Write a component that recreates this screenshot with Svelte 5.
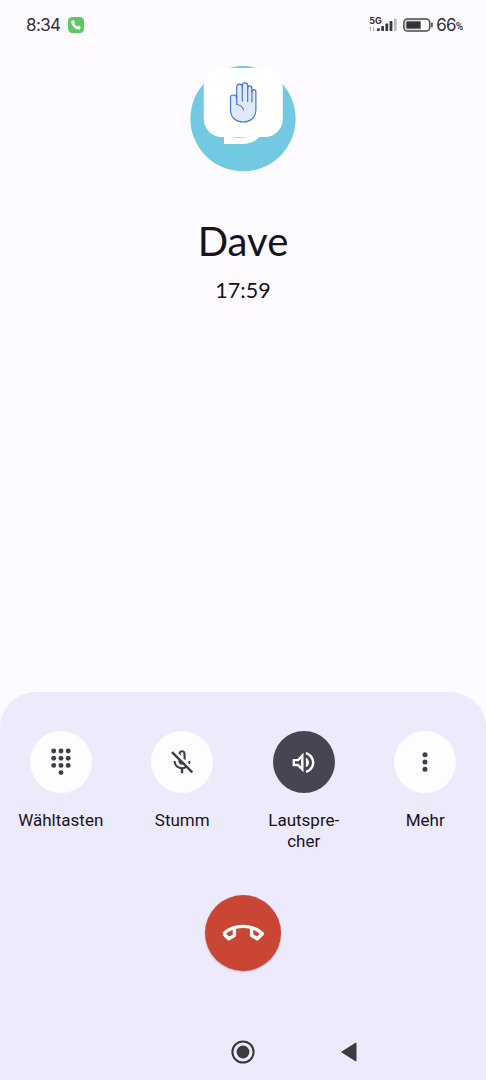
<script lang="ts">
	interface CallAction {
		id: string;
		lines: string[];
		active?: boolean;
	}

	const caller = 'Dave';
	const duration = '17:59';
	const battery = 66;

	const actions: CallAction[] = [
		{ id: 'keypad', lines: ['Wähltasten'] },
		{ id: 'mute', lines: ['Stumm'] },
		{ id: 'speaker', lines: ['Lautspre-', 'cher'], active: true },
		{ id: 'more', lines: ['Mehr'] }
	];

	const keypadDots = [
		[4.7, 1], [12, 1], [19.2, 1],
		[4.7, 8.2], [12, 8.2], [19.2, 8.2],
		[4.7, 15.4], [12, 15.4], [19.2, 15.4],
		[12, 22.6]
	];
</script>

<div class="screen">
	<header class="status">
		<span class="clock">8:34</span>
		<svg class="call-badge" width="16" height="16" viewBox="0 0 16 16">
			<rect width="16" height="16" rx="4.2" fill="#5dc866" />
			<path
				d="M4 3.700 5.600 3l1.700 2.500-1 1.300c.6 1.200 1.400 2 2.700 2.700l1.400-1 2.300 1.700-.7 1.700c-.4.8-1.700.8-2.800.4C6.500 11.300 4.500 9.200 3.600 6.700 3.200 5.500 3.200 4.300 4 3.700z"
				fill="#fff"
			/>
		</svg>
		<div class="indicators">
			<div class="network">
				<span class="generation">5G</span>
				<svg width="28" height="15" viewBox="0 0 28 15">
					<path d="M1.500 14v-4M.2 11.300 1.500 10M4.500 10v4M5.800 12.700 4.500 14" fill="none" stroke="#b4b3b8" />
					<g fill="#39393d">
						<rect x="8" y="11.200" width="2.800" height="2.800" rx=".7" />
						<rect x="12.200" y="9" width="2.800" height="5" rx=".7" />
						<rect x="16.400" y="6.500" width="2.800" height="7.500" rx=".7" />
						<rect x="20.600" y="4" width="2.800" height="10" rx=".7" />
					</g>
					<rect x="24.900" y="1.500" width="2.700" height="12.500" rx=".7" fill="#b9b8bc" />
				</svg>
			</div>
			<svg class="battery" width="30" height="14" viewBox="0 0 30 14">
				<rect x=".9" y=".9" width="25.800" height="12.200" rx="3.600" fill="none" stroke="#47474b" stroke-width="1.500" />
				<rect x="2.500" y="2.500" width="22.600" height="9" rx="1.800" fill="#fff" />
				<path d="M4.300 2.500H18v9H4.300a1.800 1.800 0 0 1-1.800-1.800V4.300a1.800 1.800 0 0 1 1.800-1.800z" fill="#b9b8bc" />
				<rect x="3.500" y="3.500" width="14" height="7" rx=".5" fill="#333337" />
				<path d="M28.900 5.300v3.400" stroke="#39393d" stroke-width="1.500" stroke-linecap="round" />
			</svg>
			<span class="level">{battery}</span><span class="percent">%</span>
		</div>
	</header>

	<main>
		<svg class="avatar" width="106" height="106" viewBox="0 0 106 106">
			<circle cx="53" cy="52.700" r="52.600" fill="#72c9e1" />
			<path d="M34 70h35v1.500C65 75.500 59 78 52 78H34z" fill="#fff" />
			<rect x="13.800" y="1.500" width="79" height="69.500" rx="18" fill="#fff" />
			<path d="M41 1.600Q53-.8 65 1.600 53 2.600 41 1.600zM40.500 71.200h16.500q-8 1.500-16.500 0z" fill="#72c9e1" />
			<path
				d="M40.500 44V31.500c0-3.600 6.200-3.200 6.200.5V20.800c0-3.700 5.600-3.700 5.600 0v-1.300c0-3.600 5.400-3.600 5.400 0v3c0-3.400 4.200-3.400 4.200 0V26c0-3.200 4-3 4 .2V44c0 7.500-5.500 12-12.700 12s-12.700-4.500-12.700-12z"
				fill="#e0eafb"
				stroke="#4d76cf"
				stroke-width="1.200"
				stroke-linejoin="round"
			/>
			<path
				d="M46.700 31v7.500c3.800.5 6.300 2.200 6.700 5.500M52.300 20v15M57.700 22v13.500M61.900 25v11"
				fill="none"
				stroke="#4d76cf"
				stroke-width="1.200"
				stroke-linecap="round"
			/>
		</svg>
		<h1>{caller}</h1>
		<p class="duration">{duration}</p>
	</main>

	<section class="panel">
		<div class="actions">
			{#each actions as action (action.id)}
				<div class="action">
					<button class="round" class:active={action.active} aria-label={action.lines.join('')}>
						{#if action.id === 'keypad'}
							<svg width="24" height="24" viewBox="0 0 24 24" overflow="visible">
								{#each keypadDots as [x, y]}
									<circle cx={x} cy={y} r="2.450" />
								{/each}
							</svg>
						{:else if action.id === 'mute'}
							<svg width="29" height="29" viewBox="0.400 0.200 24 24">
								<path
									d="M10.800 4.900c0-.66.54-1.200 1.200-1.200s1.200.54 1.200 1.200l-.01 3.910L15 10.600V5c0-1.660-1.340-3-3-3-1.540 0-2.790 1.160-2.960 2.650l1.760 1.760V4.900zM19 11h-1.700c0 .58-.1 1.130-.27 1.640l1.270 1.270c.44-.88.7-1.870.7-2.910zM4.410 2.860 3 4.270l6 6V11c0 1.660 1.340 3 3 3 .23 0 .44-.03.65-.08l1.660 1.660c-.71.33-1.500.52-2.310.52-2.760 0-5.300-2.100-5.300-5.100H5c0 3.410 2.720 6.230 6 6.720V21h2v-3.280c.91-.13 1.770-.45 2.550-.9l4.200 4.180 1.410-1.410L4.410 2.860z"
								/>
							</svg>
						{:else if action.id === 'speaker'}
							<svg width="29" height="29" viewBox="0 0 24 24">
								<path
									d="M3 9v6h4l5 5V4L7 9H3zm7-.17v6.340L7.830 13H5v-2h2.830L10 8.830zM16.500 12c0-1.770-1.020-3.290-2.500-4.030v8.050c1.480-.73 2.500-2.250 2.500-4.020zM14 3.230v2.060c2.890.86 5 3.540 5 6.710s-2.110 5.850-5 6.710v2.060c4.010-.91 7-4.490 7-8.770s-2.990-7.860-7-8.770z"
								/>
							</svg>
						{:else}
							<svg width="24" height="24" viewBox="0 0 24 24">
								<circle cx="12" cy="4.800" r="2.500" />
								<circle cx="12" cy="12" r="2.500" />
								<circle cx="12" cy="19.200" r="2.500" />
							</svg>
						{/if}
					</button>
					<div class="label">
						{#each action.lines as line}
							<span>{line}</span>
						{/each}
					</div>
				</div>
			{/each}
		</div>

		<button class="hangup" aria-label="Auflegen">
			<svg width="44" height="20" viewBox="0 0 44 20">
				<path
					d="M2.600 10.700C7.500 6 14 3.400 22 3.400S36.500 6 41.400 10.700L36.300 15.800Q33.500 14 30.600 12.400V4.900M2.600 10.700 7.700 15.800Q10.500 14 13.400 12.400V4.900"
					fill="none"
					stroke="#fff"
					stroke-width="3.400"
					stroke-linejoin="round"
				/>
			</svg>
		</button>

		<nav>
			<svg width="24" height="24" viewBox="0 0 24 24">
				<circle cx="12" cy="12" r="10.600" fill="none" stroke="#35343c" stroke-width="2" />
				<circle cx="12" cy="12" r="6.400" fill="#3c3b40" />
			</svg>
			<svg class="back" width="18" height="22" viewBox="0 0 18 22">
				<path d="M1.700 11 16 2v18z" fill="#3c3b40" stroke="#3c3b40" stroke-linejoin="round" />
			</svg>
		</nav>
	</section>
</div>

<style>
	:global(body) {
		margin: 0;
		background: #fdfbff;
	}

	.screen {
		display: flex;
		flex-direction: column;
		width: 486px;
		height: 1080px;
		overflow: hidden;
		background: #fdfbff;
		color: #15141d;
		font-family: Lato, sans-serif;
	}

	.status {
		display: flex;
		align-items: center;
		height: 49px;
		padding: 0 23px 0 26px;
		color: #323136;
	}

	.clock {
		width: 42px;
		font-family: Inter, sans-serif;
		font-size: 17px;
		letter-spacing: -0.6px;
	}

	.indicators {
		display: flex;
		align-items: center;
		margin-left: auto;
	}

	.network {
		display: grid;
		width: 28px;
		margin-right: 6px;
	}

	.network > * {
		grid-area: 1 / 1;
	}

	.generation {
		margin-top: -1px;
		font: 700 9px/9px Inter, sans-serif;
	}

	.battery {
		margin-right: 3px;
	}

	.level {
		font-family: Inter, sans-serif;
		font-size: 17px;
		letter-spacing: -0.8px;
	}

	.percent {
		padding-top: 4px;
		font: 500 10px Roboto, sans-serif;
	}

	main {
		display: flex;
		flex: 1;
		flex-direction: column;
		align-items: center;
		padding-top: 17px;
	}

	h1 {
		margin: 44px 0 0;
		font-size: 40px;
		font-weight: 400;
		line-height: 50px;
	}

	.duration {
		margin: 11px 0 0;
		font-size: 21.5px;
		line-height: 26px;
	}

	.panel {
		display: flex;
		flex-direction: column;
		align-items: center;
		box-sizing: border-box;
		height: 388px;
		padding-top: 39px;
		border-radius: 36px 36px 0 0;
		background: #edeafc;
	}

	.actions {
		display: grid;
		grid-template-columns: repeat(4, 1fr);
		width: 100%;
		height: 164px;
	}

	.action {
		display: flex;
		flex-direction: column;
		align-items: center;
	}

	button {
		display: flex;
		align-items: center;
		justify-content: center;
		padding: 0;
		border: 0;
		border-radius: 50%;
	}

	.round {
		width: 62px;
		height: 62px;
		background: #fdfcff;
		fill: #3e3e49;
	}

	.round.active {
		background: #454652;
		fill: #fff;
	}

	.label {
		display: flex;
		flex-direction: column;
		align-items: center;
		margin-top: 17px;
		font-family: Roboto, sans-serif;
		font-size: 17px;
		line-height: 21px;
	}

	.hangup {
		flex: none;
		width: 76px;
		height: 76px;
		background: #c94635;
		box-shadow: 0 1px 2px #66557755;
	}

	nav {
		display: flex;
		align-items: center;
		justify-content: flex-end;
		box-sizing: border-box;
		width: 100%;
		margin-top: 69px;
		padding-right: 128px;
	}

	.back {
		margin-left: 85px;
	}
</style>
